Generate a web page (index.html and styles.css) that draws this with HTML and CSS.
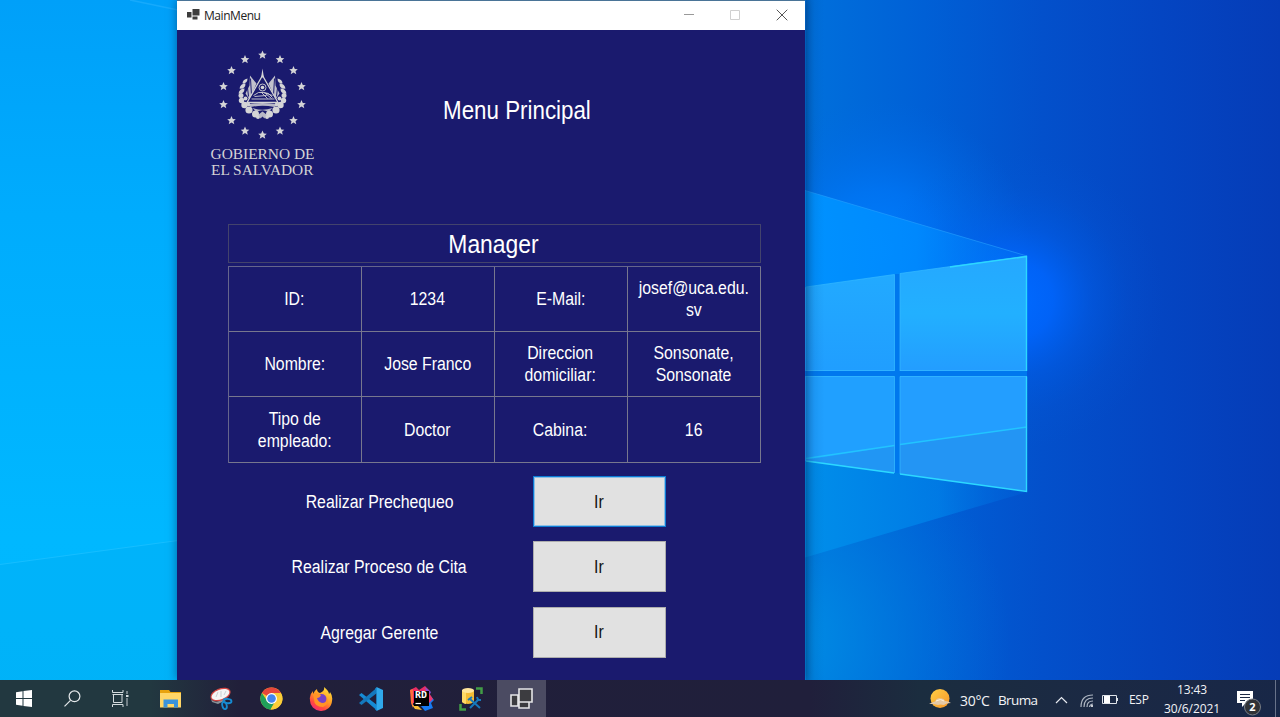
FILE: index.html
```html
<!DOCTYPE html>
<html lang="es">
<head>
<meta charset="utf-8">
<title>MainMenu</title>
<link rel="stylesheet" href="styles.css">
</head>
<body>
<div class="desktop">
  <svg class="wallpaper" viewBox="0 0 1280 717" preserveAspectRatio="none">
    <defs>
      <linearGradient id="left" x1="0" y1="0" x2="0" y2="1">
        <stop offset="0" stop-color="#00a0f9"/><stop offset=".3" stop-color="#00acfd"/><stop offset=".75" stop-color="#00b8ff"/><stop offset="1" stop-color="#00b6fd"/>
      </linearGradient>
      <linearGradient id="right" gradientUnits="userSpaceOnUse" x1="806" y1="0" x2="1280" y2="0">
        <stop offset="0" stop-color="#0070dc"/><stop offset=".25" stop-color="#0060d6"/><stop offset=".5" stop-color="#0350cb"/><stop offset=".75" stop-color="#0445c2"/><stop offset="1" stop-color="#053cb7"/>
      </linearGradient>
      <radialGradient id="lowlight" gradientUnits="userSpaceOnUse" cx="780" cy="640" r="230">
        <stop offset="0" stop-color="#0090e6"/><stop offset="1" stop-color="#0078dc" stop-opacity="0"/>
      </radialGradient>
      <radialGradient id="glow" gradientUnits="userSpaceOnUse" cx="1015" cy="300" r="150">
        <stop offset="0" stop-color="#006aff"/><stop offset=".25" stop-color="#0066ff" stop-opacity=".85"/><stop offset=".5" stop-color="#0062f4" stop-opacity=".4"/><stop offset=".75" stop-color="#005ee8" stop-opacity=".12"/><stop offset="1" stop-color="#0058dc" stop-opacity="0"/>
      </radialGradient>
      <radialGradient id="halo" gradientUnits="userSpaceOnUse" cx="880" cy="250" r="150">
        <stop offset="0" stop-color="#007eff"/><stop offset=".4" stop-color="#0078fa" stop-opacity=".7"/><stop offset="1" stop-color="#0068e4" stop-opacity="0"/>
      </radialGradient>
      <linearGradient id="beam" gradientUnits="userSpaceOnUse" x1="806" y1="0" x2="1027" y2="0">
        <stop offset="0" stop-color="#0092ff"/><stop offset=".5" stop-color="#008cff" stop-opacity=".85"/><stop offset="1" stop-color="#0078f5" stop-opacity=".3"/>
      </linearGradient>
      <linearGradient id="beam2" gradientUnits="userSpaceOnUse" x1="806" y1="0" x2="1027" y2="0">
        <stop offset="0" stop-color="#008eea"/><stop offset=".6" stop-color="#0080e8" stop-opacity=".8"/><stop offset="1" stop-color="#0064dc" stop-opacity=".3"/>
      </linearGradient>
      <linearGradient id="pane" x1="0" y1="0" x2="0" y2="1">
        <stop offset="0" stop-color="#22aaff"/><stop offset="1" stop-color="#209eff"/>
      </linearGradient>
      <linearGradient id="pane2" x1="0" y1="0" x2="0" y2="1">
        <stop offset="0" stop-color="#25a8ff"/><stop offset=".5" stop-color="#22b0ff"/><stop offset="1" stop-color="#239dff"/>
      </linearGradient>
      <linearGradient id="edge" gradientUnits="userSpaceOnUse" x1="806" y1="0" x2="880" y2="0">
        <stop offset="0" stop-color="#00407c" stop-opacity=".3"/><stop offset=".12" stop-color="#00509c" stop-opacity=".1"/><stop offset=".25" stop-color="#00509c" stop-opacity="0"/>
      </linearGradient>
    </defs>
    <rect width="806" height="717" fill="url(#left)"/>
    <path d="M0 565L178 541V717H0z" fill="#009fe6" opacity=".18"/>
    <path d="M0 564.500L178 540.500" stroke="#2cc4ff" stroke-width="1" opacity=".5"/>
    <path d="M130 0L178 10" stroke="#2cb4ff" stroke-width="1.500" opacity=".5"/>
    <rect x="800" width="480" height="717" fill="url(#right)"/>
    <rect x="800" y="400" width="480" height="317" fill="url(#lowlight)"/>
    <rect x="800" y="100" width="480" height="310" fill="url(#halo)"/>
    <rect x="800" y="100" width="480" height="400" fill="url(#glow)"/>
    <path d="M800 189L1027 256V372H800z" fill="url(#beam)"/>
    <path d="M800 372H1027V492L800 559z" fill="url(#beam2)"/>
    <path d="M800 189L1027 256" stroke="#2aa4ff" opacity=".55"/>
    <path d="M800 371H1027V376H800zM894.500 274H900V473H894.500z" fill="#0078ee"/>
    <path d="M800 288L894.500 274.500V371H800z" fill="url(#pane)"/>
    <path d="M900 273.500L1027 256V371H900z" fill="url(#pane2)"/>
    <path d="M800 376H894.500V473L800 460.500z" fill="#20a0ff"/>
    <path d="M900 376H1027V491.500L900 474z" fill="#239eff"/>
    <path d="M806 460L894.500 446V473zM900 445L1027 427V491.500L900 474z" fill="#238fec" opacity=".6"/>
    <path d="M806 458.500L894.500 445.500M900 444.500L1027 427" stroke="#22c4ff" stroke-width="1.500"/>
    <path d="M806 287L894.500 274.500V371M900 371V273.500L1027 256M806 376.500H894.500V473M900 474V376.500H1027M806 370.500H894M900 370.500H1027" fill="none" stroke="#36baff" stroke-width="1" opacity=".7"/>
    <path d="M950 267L1026.500 256.500V371M1026.500 376.500V491.500L900 474M894 473L806 461" fill="none" stroke="#2cd8ff" stroke-width="1.400"/>
    <rect x="806" width="74" height="680" fill="url(#edge)"/>
  </svg>

  <main class="window">
    <header class="titlebar">
      <svg class="app-icon" viewBox="0 0 14 12"><path d="M5.500 0H12.500V6.500H5.500zM0 3H4.500V8.500H0zM5.500 7.500H10.500V10.500H5.500z" fill="#3d3d3d"/></svg>
      <span class="caption">MainMenu</span>
      <span class="control"><svg viewBox="0 0 12 12"><path d="M1 5.500H11" stroke="#999"/></svg></span>
      <span class="control"><svg viewBox="0 0 12 12"><path d="M1.500 1.500H10.500V10.500H1.500z" stroke="#d0d0d0" fill="none"/></svg></span>
      <span class="control"><svg viewBox="0 0 12 12"><path d="M.7 .7L11.300 11.300M11.300 .7L.7 11.300" stroke="#555"/></svg></span>
    </header>

    <section class="heading">
      <svg class="logo" viewBox="0 0 106 132" fill="#d4d4d6">
        <defs>
          <path id="star" d="M0-4.400L1.300-1.400 4.300-1.300 2 .8 2.800 3.700 0 2.100-2.800 3.700-2 .8-4.300-1.300-1.300-1.400z"/>
          <g id="wreath">
            <path d="M-15-17q-5 1-5 5 5 0 5-5zM-17-12q-5 0-6 5 6 1 6-5zM-18-7q-5 0-6 5 6 1 6-5z"/>
            <circle cx="-21.500" cy="0" r="2.500"/><circle cx="-21" cy="5" r="2.700"/><circle cx="-18" cy="9.500" r="3.200"/><circle cx="-13.500" cy="14.500" r="3.600"/><circle cx="-7" cy="18.500" r="3.500"/><circle cx="-4.500" cy="21.500" r="2"/><circle cx="-17" cy="3" r="2"/><circle cx="-14" cy="9" r="1.800"/>
            <path d="M-12.500-20L-6-12-13 4-17-2-13-10z" opacity=".9"/>
            <path d="M-12-17L-11 0M-15-8L-14 1" stroke="#1a1a6e" stroke-width="1"/>
          </g>
        </defs>
        <use href="#star" x="52.500" y="5"/><use href="#star" x="70" y="9.500"/><use href="#star" x="83.500" y="20.500"/><use href="#star" x="91.500" y="36.500"/><use href="#star" x="91.500" y="54.500"/><use href="#star" x="83.500" y="70.500"/><use href="#star" x="70" y="81"/><use href="#star" x="52.500" y="85"/><use href="#star" x="35" y="81"/><use href="#star" x="21.500" y="70.500"/><use href="#star" x="13.500" y="54.500"/><use href="#star" x="13.500" y="36.500"/><use href="#star" x="21.500" y="20.500"/><use href="#star" x="35" y="9.500"/>
        <g transform="translate(52.500 45.500)">
          <use href="#wreath"/><use href="#wreath" transform="scale(-1 1)"/>
          <path d="M0-20L15.500 7H-15.500z" fill="#1a1a6e" stroke="#d4d4d6" stroke-width="1.300"/>
          <path d="M0-27L1.400-18H-1.400z"/>
          <circle cy="-8" r="3.500" fill="none" stroke="#d4d4d6" stroke-width=".9"/><circle cy="-8" r="1.800"/>
          <path d="M-9 0L-4-3 1-3 6-2 10 2M-11 3.500H12M-1-3L5 3M3-2L9 3M1-3L10 0M-8 1L4 0" fill="none" stroke="#d4d4d6" stroke-width=".9"/>
          <path d="M-15 9Q0 6 15 9L12 11.500Q0 9-12 11.500zM-10 12.500Q0 16 10 12.500L6 16.500Q0 13-6 16.500zM-4 19L0 16 4 19 2 23 0 21-2 23z" opacity=".85"/>
        </g>
        <text class="logo-text" x="0.500" y="109" textLength="104" lengthAdjust="spacingAndGlyphs">GOBIERNO DE</text>
        <text class="logo-text" x="1" y="125" textLength="102.500" lengthAdjust="spacingAndGlyphs">EL SALVADOR</text>
      </svg>
      <h1 class="title"><span class="narrow">Menu Principal</span></h1>
    </section>

    <section class="profile">
      <h2 class="role"><span class="narrow">Manager</span></h2>
      <div class="table">
        <div class="cell"><span class="narrow">ID:</span></div>
        <div class="cell"><span class="narrow">1234</span></div>
        <div class="cell"><span class="narrow">E-Mail:</span></div>
        <div class="cell"><span class="narrow">josef@uca.edu.<br>sv</span></div>
        <div class="cell"><span class="narrow">Nombre:</span></div>
        <div class="cell"><span class="narrow">Jose Franco</span></div>
        <div class="cell"><span class="narrow">Direccion<br>domiciliar:</span></div>
        <div class="cell"><span class="narrow">Sonsonate,<br>Sonsonate</span></div>
        <div class="cell"><span class="narrow">Tipo de<br>empleado:</span></div>
        <div class="cell"><span class="narrow">Doctor</span></div>
        <div class="cell"><span class="narrow">Cabina:</span></div>
        <div class="cell"><span class="narrow">16</span></div>
      </div>
    </section>

    <section class="actions">
      <div class="action"><span class="narrow">Realizar Prechequeo</span></div><button class="go focused"><span class="narrow">Ir</span></button>
      <div class="action"><span class="narrow">Realizar Proceso de Cita</span></div><button class="go"><span class="narrow">Ir</span></button>
      <div class="action"><span class="narrow">Agregar Gerente</span></div><button class="go"><span class="narrow">Ir</span></button>
    </section>
  </main>

  <footer class="taskbar">
    <nav class="apps">
      <span class="system"><svg width="16" height="17" viewBox="0 0 16 17"><path d="M0 2.200L6.500 1.200V8H0zM7.500 1L16 0V8H7.500zM0 9H6.500V15.800L0 14.800zM7.500 9H16V17L7.500 16z" fill="#fff"/></svg></span>
      <span class="system"><svg width="17" height="17" viewBox="0 0 17 17" fill="none" stroke="#e4e8ea" stroke-width="1.200"><circle cx="10.500" cy="6.300" r="5.400"/><path d="M6.500 10.300L.5 16.300"/></svg></span>
      <span class="system"><svg width="17" height="17" viewBox="0 0 17 17" fill="none" stroke="#d5dcdf"><path d="M.5 0V2.500H11V0M.5 17V14.500H11V17M1.500 4.500V12.500H10V4.500M.5 4.500H11"/><path d="M15 1V4M15 8V16" stroke-width="1.500" opacity=".6"/><path d="M14 6H16.500" stroke-width="2"/></svg></span>
      <span class="app first"><svg width="22" height="20" viewBox="0 0 22 20"><path d="M0 1H9L10.500 3H21V18H0z" fill="#e8a30e"/><path d="M0 4H21V18.500H0z" fill="#ffd667"/><path d="M3.500 18.500V10.500H18V18.500H14V15H7.500V18.500z" fill="#3993dd"/></svg></span>
      <span class="app"><svg width="24" height="24" viewBox="0 0 24 24"><path d="M2 12Q6 17 12 13L20 5 17 13 9 17 3 15z" fill="#8a9198"/><ellipse cx="11.500" cy="7.500" rx="10" ry="5.500" transform="rotate(-20 11.500 7.500)" fill="#f5f5f5" stroke="#d44642" stroke-width="1.200"/><path d="M7 10L9 5M12 10L12 4M15 8L17 4" stroke="#b8c0c4" stroke-width=".7"/><ellipse cx="18.500" cy="14" rx="4" ry="2.200" transform="rotate(5 18.500 14)" fill="none" stroke="#168bd2" stroke-width="1.800"/><ellipse cx="15.500" cy="18.500" rx="2.200" ry="3.700" fill="none" stroke="#168bd2" stroke-width="1.800" transform="rotate(-15 15.500 18.500)"/></svg></span>
      <span class="app"><svg width="23" height="23" viewBox="0 0 24 24"><circle cx="12" cy="12" r="11.500" fill="#f8c934"/><path d="M12 12L2 6.200A11.500 11.500 0 0 1 22 6.300H12z" fill="#e7463b"/><path d="M2 6.200L9 17 7 16 11 23.500A11.500 11.500 0 0 1 2 6.200z" fill="#20a05a"/><path d="M7.500 14.500L16.500 14 11 23.500Q4 22 2 17z" fill="#20a05a"/><path d="M16.500 14L22.500 7.500A11.500 11.500 0 0 1 11 23.500z" fill="#fbce39"/><circle cx="12" cy="12" r="5.700" fill="#fff"/><circle cx="12" cy="12" r="4.500" fill="#4385ef"/></svg></span>
      <span class="app"><svg width="24" height="24" viewBox="0 0 24 24"><defs><linearGradient id="fox" x1=".8" y1="0" x2=".2" y2="1"><stop offset="0" stop-color="#ffe33b"/><stop offset=".45" stop-color="#ff9b26"/><stop offset=".75" stop-color="#ff493f"/><stop offset="1" stop-color="#f02683"/></linearGradient></defs><path d="M15 0Q20 4 20 7 21 6 21 5 24 9 23 14A11 10.500 0 0 1 1 13Q0 8 4 4V7Q6 3 8 2 8 5 11 6 16 4 15 0z" fill="url(#fox)"/><circle cx="12.500" cy="12" r="5" fill="#7542c8"/><path d="M4 7Q8 5 12 8 11 11 8 11 9 15 13 16 18 16 18 11 21 17 14 20 5 20 5 12z" fill="#ff9426"/></svg></span>
      <span class="app"><svg width="24" height="24" viewBox="0 0 24 24"><path d="M0 8L2.500 6 18 18V23.500z" fill="#168bd5"/><path d="M0 16L2.500 18 18 6V.5z" fill="#1478bd"/><path d="M17.500 0L24 3V21L17.500 24Z" fill="#30a9ec"/><path d="M17.500 0L16 2 18 4V20L16 22 17.500 24z" fill="#168bd5"/></svg></span>
      <span class="app"><svg width="25" height="25" viewBox="0 0 25 25"><path d="M1 4L7 1 10 4 16 0 21 5V17H4z" fill="#e92c64"/><path d="M16 1L22 6 19 12z" fill="#8651d8"/><path d="M1 4L4 3V22L2 17z" fill="#ff6b3b"/><path d="M3 19L9 20 13 24 6 23z" fill="#f7be35"/><path d="M20 8L25 14 22 17 24 22 16 25 12 20H20z" fill="#167bf3"/><path d="M20 7L24 13 20 17z" fill="#ec376e"/><rect x="5" y="5" width="15" height="15" fill="#000"/><text class="rider" x="6" y="12.200" textLength="12" lengthAdjust="spacingAndGlyphs">RD</text><path d="M6.500 17.500H12" stroke="#fff" stroke-width="1.200"/></svg></span>
      <span class="app"><svg width="24" height="24" viewBox="0 0 24 24"><path d="M3 3V15Q9 19 15 15V3z" fill="#f4bc35"/><path d="M3 3V15Q5 17 7 17V4z" fill="#ffda66"/><ellipse cx="9" cy="3.500" rx="6" ry="2.500" fill="#ffe59b"/><path d="M17 1.500H22.500V7M1.500 17V22.500H7" fill="none" stroke="#429d46" stroke-width="2.500"/><path d="M11 12L21 21M20 12L11 21" stroke="#1679bd" stroke-width="2"/><path d="M18 10L19 13 22 13M9 13L13 10" stroke="#1679bd" stroke-width="2" fill="none"/></svg></span>
      <span class="app active"><svg width="23" height="22" viewBox="0 0 23 22"><path d="M9 1H22V14H9zM1 7H8V18H1zM9 14H19V20H9z" fill="#3c3c40" stroke="#e5e5e7" stroke-width="1.600"/></svg></span>
    </nav>
    <div class="tray">
      <svg class="weather" width="22" height="20" viewBox="0 0 22 20"><defs><linearGradient id="sun" x1="0" y1="0" x2="1" y2="1"><stop offset="0" stop-color="#ffcf45"/><stop offset="1" stop-color="#f79529"/></linearGradient></defs><circle cx="11" cy="9.500" r="9.500" fill="url(#sun)"/><path d="M0 15Q3 13 6 12.500 8 8 12 9.500 15 9 16 12 19 12 22 14 17 14 15 16 11 15 9 16 5 14.500 0 15z" fill="#e5c9a5"/><path d="M7 12Q12 9 15 12" stroke="#fff0d5" fill="none"/></svg>
      <span class="temperature">30°C</span><span class="sky">Bruma</span>
      <svg class="chevron" width="13" height="8" viewBox="0 0 13 8"><path d="M1 7L6.500 1.500 12 7" fill="none" stroke="#e7eaf0" stroke-width="1.200"/></svg>
      <svg class="wifi" width="14" height="14" viewBox="0 0 14 14" fill="none" stroke="#aeb6c2" stroke-width="1.200"><path d="M1 13Q1 1 13 1M4 13Q4 4 13 4M7 13Q7 7 13 7M9.500 13Q10 10 13 10"/><circle cx="12" cy="12" r="1" fill="#fff" stroke="none"/></svg>
      <svg class="battery" width="17" height="10" viewBox="0 0 17 10"><path d="M.5 .5H14.500V8.500H.5zM15.500 3V6" fill="none" stroke="#dfe3e9"/><path d="M2 1H8V8H2z" fill="#fff"/></svg>
      <span class="language">ESP</span>
      <div class="clock"><span>13:43</span><span>30/6/2021</span></div>
      <svg class="notice" width="26" height="27" viewBox="0 0 26 27"><path d="M0 2H16V14H9L5 18V14H0z" fill="#fff"/><path d="M3 5.500H13M3 8.500H13M3 11.500H8" stroke="#1c2944"/><circle cx="15.500" cy="18" r="8" fill="#303236" stroke="#777c84" stroke-width="1"/><text class="badge" x="15.500" y="22">2</text></svg>
    </div>
  </footer>
</div>
</body>
</html>
```

FILE: styles.css
```css
* { box-sizing: border-box; }
body { margin: 0; overflow: hidden; font-family: "Liberation Sans", Arial, sans-serif; }
.desktop { position: relative; width: 1280px; height: 717px; overflow: hidden; display: flex; flex-direction: column; justify-content: flex-end; }
.wallpaper { position: absolute; inset: 0; width: 1280px; height: 717px; }

.window { position: absolute; left: 177px; top: 0; width: 628px; height: 680px; background: #1a1a6e; color: #fff; box-shadow: 0 0 9px rgba(0, 30, 70, .5); }
.titlebar { display: flex; align-items: center; height: 30px; background: #fff; border-top: 1px solid #4a7497; padding-left: 10px; }
.app-icon { width: 14px; height: 12px; margin-top: -2px; }
.caption { flex: 1; margin-left: 3px; color: #222; font: 12px/28px "Open Sans", sans-serif; letter-spacing: -.45px; }
.control { width: 46.500px; display: flex; justify-content: center; margin-top: -1px; }
.control svg { width: 12px; height: 12px; }

.narrow { display: inline-block; transform: scaleX(.825); white-space: nowrap; }
.heading { display: flex; height: 194px; padding: 20px 0 0 33px; }
.logo { width: 106px; height: 132px; }
.logo-text { font: 15px "Liberation Serif", serif; }
.title { margin: 44px 0 0; width: 402px; text-align: center; font-size: 26.600px; line-height: 32px; font-weight: 400; }
.title .narrow { transform: scaleX(.84); }
.role .narrow { transform: scaleX(.86); }

.profile { margin-left: 51px; width: 533px; }
.role { margin: 0 0 3px; height: 39px; border: 1px solid #43436c; text-align: center; font-size: 26.600px; line-height: 38px; font-weight: 400; padding-right: 3px; }
.table { display: grid; grid-template-columns: 133px 133px 133px 133px; grid-template-rows: 65px 65px 66px; border: 1px solid #65658c; border-width: 1px 0 0 1px; }
.cell { display: flex; align-items: center; justify-content: center; text-align: center; font-size: 19.200px; line-height: 22px; border: 1px solid #77778e; border-width: 0 1px 1px 0; padding-right: 1px; }

.actions { display: grid; grid-template-columns: 308px 133px; grid-template-rows: 51px 51px 51px; row-gap: 14.400px; margin: 13px 0 0 48px; font-size: 19.200px; }
.action { display: flex; align-items: center; justify-content: center; padding-left: 1px; padding-top: 1px; }
.go { padding: 0 2px 0 0; border: 1px solid #adadad; background: #e1e1e1; color: #111; font: inherit; }
.go.focused { border: 1.500px solid #0b7bd5; box-shadow: inset 0 0 0 1px #8fc0e6; }

.taskbar { position: relative; height: 37px; display: flex; justify-content: space-between; color: #f2f3f6; background: linear-gradient(90deg, #223840 0, #223840 150px, #211f3a 240px, #201f3b 810px, #1b2d3f 920px, #1b2944 1100px, #182747 1280px); font-family: "Open Sans", sans-serif; }
.apps { display: flex; height: 37px; }
.system, .app { display: flex; width: 48px; align-items: center; justify-content: center; }
.app { width: 50px; }
.first { margin-left: 2px; }
.active { width: 49px; margin-left: 1px; background: #4b4b62; }
.tray { display: flex; width: 351px; height: 37px; align-items: center; font-size: 14px; border-right: 1px solid #68738a; margin-right: 4px; }
.weather { flex: none; margin-left: 4px; }
.temperature { width: 38px; margin-left: 9px; letter-spacing: -.3px; white-space: nowrap; padding-top: 3px; }
.sky { width: 40px; font-size: 13.500px; letter-spacing: -.6px; padding-top: 3px; }
.chevron { flex: none; margin: 2px 0 0 17px; }
.wifi { flex: none; margin: 4px 0 0 12px; }
.battery { flex: none; margin: 3px 0 0 8px; }
.language { width: 22px; margin: 2px 0 0 10px; font-size: 12px; letter-spacing: -.3px; }
.clock { width: 60px; margin: 1px 0 0 11px; display: flex; flex-direction: column; text-align: center; font-size: 12px; line-height: 19px; letter-spacing: -.1px; }
.notice { flex: none; margin: 8px 0 0 15px; }
.badge { fill: #fff; font: bold 11px "Open Sans", sans-serif; text-anchor: middle; }
.rider { fill: #fff; font: bold 8px "DejaVu Sans Mono", monospace; }
```
